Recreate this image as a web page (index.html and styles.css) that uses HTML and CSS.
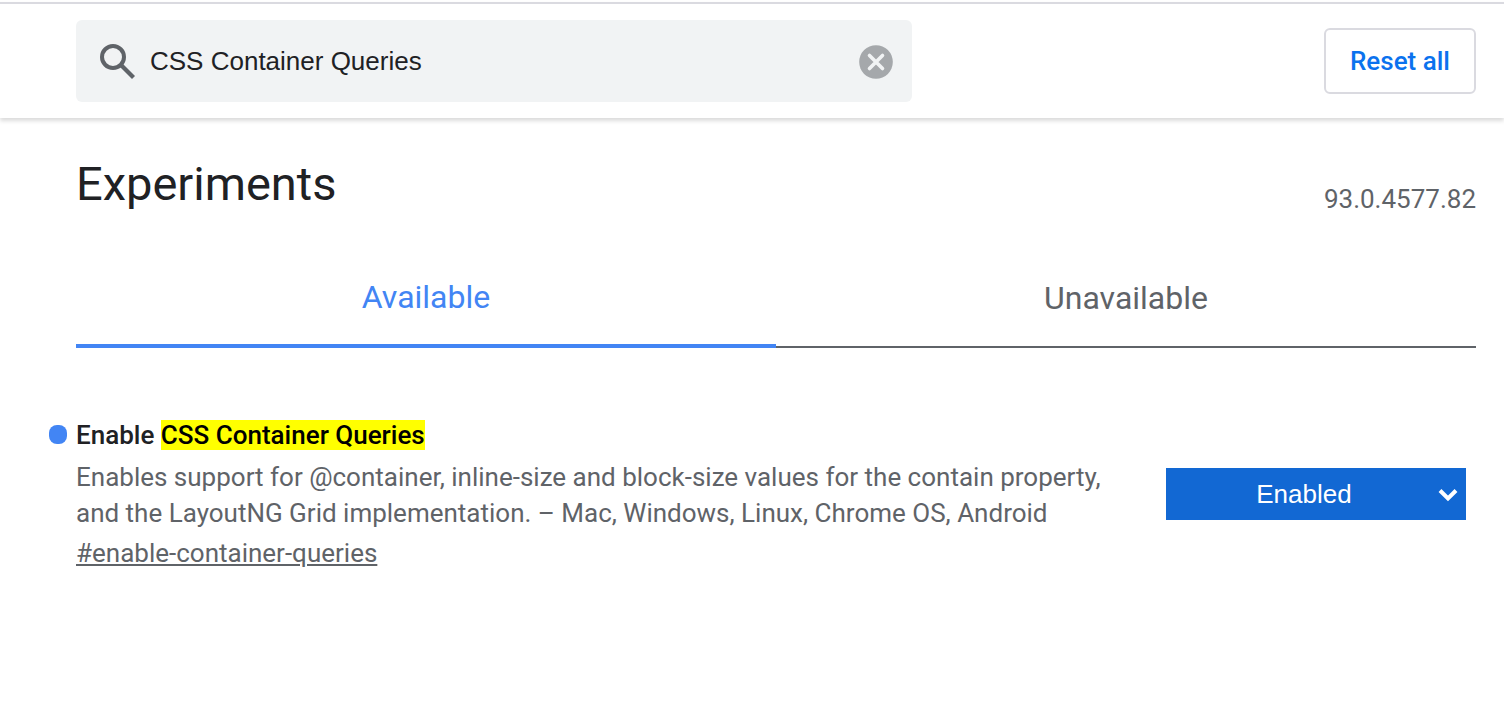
FILE: index.html
```html
<!DOCTYPE html>
<html lang="en">
<head>
<meta charset="utf-8">
<title>Experiments</title>
<link rel="stylesheet" href="styles.css">
</head>
<body>
<header class="toolbar">
  <div class="search">
    <svg class="search-icon" viewBox="0 0 36 36" aria-hidden="true"><circle cx="13" cy="14" r="11" fill="none" stroke="#5f6368" stroke-width="4"/><path d="M20.500 21.500L33.500 34.500" fill="none" stroke="#5f6368" stroke-width="4.200"/></svg>
    <input class="search-input" type="text" value="CSS Container Queries" aria-label="Search flags">
    <button class="clear" type="button" aria-label="Clear search">
      <svg class="clear-icon" viewBox="0 0 34 36" aria-hidden="true"><circle cx="17" cy="19" r="16.800" fill="#a5a8ab"/><path d="M10.500 12.500L23.500 25.500M23.500 12.500L10.500 25.500" stroke="#f1f3f4" stroke-width="3.600" stroke-linecap="round"/></svg>
    </button>
  </div>
  <button class="reset" type="button">Reset all</button>
</header>
<main class="content">
  <div class="heading">
    <h1 class="title">Experiments</h1>
    <span class="version">93.0.4577.82</span>
  </div>
  <div class="tabs" role="tablist">
    <button class="tab tab-selected" type="button" role="tab" aria-selected="true">Available</button>
    <button class="tab" type="button" role="tab" aria-selected="false">Unavailable</button>
  </div>
  <section class="experiment">
    <div class="details">
      <h2 class="name" id="flag-name">Enable <mark class="match">CSS Container Queries</mark></h2>
      <p class="description">Enables support for @container, inline-size and block-size values for the contain property, and the LayoutNG Grid implementation. – Mac, Windows, Linux, Chrome OS, Android</p>
      <a class="permalink" href="#enable-container-queries">#enable-container-queries</a>
    </div>
    <div class="choice">
      <select class="select" aria-labelledby="flag-name">
        <option>Default</option>
        <option selected>Enabled</option>
        <option>Disabled</option>
      </select>
      <svg class="chevron" viewBox="0 0 20 14" aria-hidden="true"><path d="M2 2.500L10 10.500L18 2.500" fill="none" stroke="#fff" stroke-width="4"/></svg>
    </div>
  </section>
</main>
</body>
</html>
```
FILE: styles.css
```css
* {
  box-sizing: border-box;
}

body {
  margin: 0;
  padding-top: 2px;
  background: #fff;
  color: #202124;
  font-family: Roboto, sans-serif;
  font-size: 26px;
}

button,
input,
select {
  font: inherit;
}

.toolbar {
  display: flex;
  align-items: center;
  justify-content: space-between;
  gap: 24px;
  padding: 16px 28px 16px 76px;
  border-top: 2px solid #dadae0;
  box-shadow: 0 3px 4px rgba(0, 0, 0, 0.14);
}

.search {
  display: flex;
  flex: 0 1 836px;
  align-items: center;
  gap: 14px;
  padding: 0 19px 0 24px;
  border-radius: 6px;
  background: #f1f3f4;
}

.search-icon {
  flex: none;
  width: 36px;
  height: 36px;
}

.search-input {
  flex: 1;
  min-width: 0;
  height: 82px;
  padding: 0;
  border: 0;
  outline: 0;
  background: transparent;
  color: #202124;
  font-family: "Liberation Sans", Arial, sans-serif;
}

.clear {
  flex: none;
  padding: 0;
  border: 0;
  background: transparent;
}

.clear-icon {
  display: block;
  width: 34px;
  height: 36px;
}

.reset {
  height: 66px;
  padding: 0 24px;
  border: 2px solid #dadae0;
  border-radius: 6px;
  background: #fff;
  color: #0b72ee;
  font-weight: 500;
}

.content {
  padding: 32px 28px 32px 76px;
}

.heading {
  display: flex;
  align-items: flex-end;
  justify-content: space-between;
}

.title {
  margin: 0;
  font-size: 47px;
  font-weight: 400;
  line-height: 68px;
}

.version {
  color: #5f6368;
  line-height: 38px;
}

.tabs {
  display: flex;
  margin-top: 30px;
}

.tab {
  flex: 1;
  height: 100px;
  padding: 2px 0 0;
  border: 0;
  border-bottom: 2px solid #5f6368;
  background: transparent;
  color: #5f6368;
  font-size: 32px;
}

.tab-selected {
  border-bottom: 4px solid #4285f4;
  color: #4285f4;
}

.experiment {
  display: flex;
  align-items: center;
  justify-content: space-between;
  gap: 48px;
  margin-top: 68px;
  padding-right: 10px;
}

.details {
  flex: 0 1 1040px;
}

.name {
  position: relative;
  margin: 0;
  font-size: 26px;
  font-weight: 500;
  line-height: 38px;
}

.name::before {
  position: absolute;
  top: 9px;
  left: -27px;
  width: 18px;
  height: 19px;
  border-radius: 8px;
  background: #4285f4;
  content: "";
}

.match {
  background: #ff0;
  color: #000;
}

.description {
  margin: 5px 0 4px;
  color: #5f6368;
  line-height: 36px;
}

.permalink {
  color: #5f6368;
  line-height: 36px;
}

.choice {
  position: relative;
  flex: none;
}

.select {
  display: block;
  width: 300px;
  height: 52px;
  padding: 1px 24px 0 0;
  border: 0;
  border-radius: 0;
  appearance: none;
  background: #1268d3;
  color: #fff;
  font-family: "Liberation Sans", Arial, sans-serif;
  text-align: center;
  text-align-last: center;
}

.chevron {
  position: absolute;
  top: 20px;
  right: 8px;
  width: 20px;
  height: 14px;
  pointer-events: none;
}
```
